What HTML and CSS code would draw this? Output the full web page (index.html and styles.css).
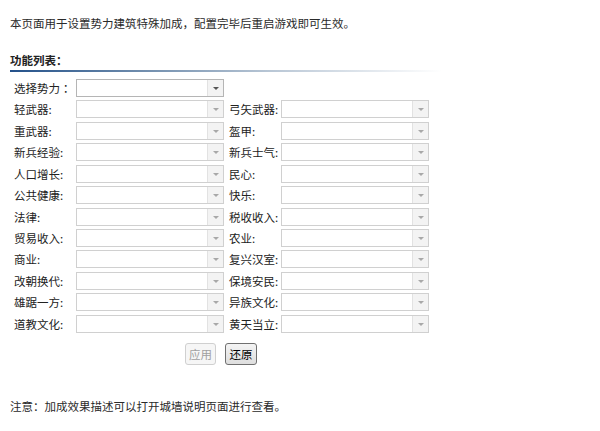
FILE: index.html
```html
<!DOCTYPE html>
<html lang="zh-CN">
<head>
<meta charset="utf-8">
<title>势力建筑特殊加成</title>
<link rel="stylesheet" href="styles.css">
</head>
<body>
<div class="page">
  <p class="intro">本页面用于设置势力建筑特殊加成<span class="pn">，</span>配置完毕后重启游戏即可生效。</p>
  <h2 class="title">功能列表<span class="pn">：</span></h2>
  <div class="rule"></div>
  <div class="form">
    <span class="lbl">选择势力<span class="pn">：</span></span><div class="sel active"><span class="arrow"></span></div><span class="empty"></span><span class="empty"></span>
    <span class="lbl">轻武器:</span><div class="sel"><span class="arrow"></span></div><span class="lbl r">弓矢武器:</span><div class="sel"><span class="arrow"></span></div>
    <span class="lbl">重武器:</span><div class="sel"><span class="arrow"></span></div><span class="lbl r">盔甲:</span><div class="sel"><span class="arrow"></span></div>
    <span class="lbl">新兵经验:</span><div class="sel"><span class="arrow"></span></div><span class="lbl r">新兵士气:</span><div class="sel"><span class="arrow"></span></div>
    <span class="lbl">人口增长:</span><div class="sel"><span class="arrow"></span></div><span class="lbl r">民心:</span><div class="sel"><span class="arrow"></span></div>
    <span class="lbl">公共健康:</span><div class="sel"><span class="arrow"></span></div><span class="lbl r">快乐:</span><div class="sel"><span class="arrow"></span></div>
    <span class="lbl">法律:</span><div class="sel"><span class="arrow"></span></div><span class="lbl r">税收收入:</span><div class="sel"><span class="arrow"></span></div>
    <span class="lbl">贸易收入:</span><div class="sel"><span class="arrow"></span></div><span class="lbl r">农业:</span><div class="sel"><span class="arrow"></span></div>
    <span class="lbl">商业:</span><div class="sel"><span class="arrow"></span></div><span class="lbl r">复兴汉室:</span><div class="sel"><span class="arrow"></span></div>
    <span class="lbl">改朝换代:</span><div class="sel"><span class="arrow"></span></div><span class="lbl r">保境安民:</span><div class="sel"><span class="arrow"></span></div>
    <span class="lbl">雄踞一方:</span><div class="sel"><span class="arrow"></span></div><span class="lbl r">异族文化:</span><div class="sel"><span class="arrow"></span></div>
    <span class="lbl">道教文化:</span><div class="sel"><span class="arrow"></span></div><span class="lbl r">黄天当立:</span><div class="sel"><span class="arrow"></span></div>
  </div>
  <div class="buttons">
    <button class="btn disabled" disabled>应用</button>
    <button class="btn">还原</button>
  </div>
  <p class="note">注意<span class="pn">：</span>加成效果描述可以打开城墙说明页面进行查看。</p>
</div>
</body>
</html>
```
FILE: styles.css
```css
html, body {
  margin: 0;
  padding: 0;
  background: #ffffff;
}
.page {
  font-family: "Noto Sans CJK SC", "Noto Sans", sans-serif;
  font-size: 11.5px;
  color: #222;
  padding-left: 10px;
}
.pn {
  font-family: "Noto Sans CJK TC", "Noto Sans CJK SC", sans-serif;
}
.intro {
  margin: 0;
  padding-top: 15px;
  line-height: 16px;
  color: #2a2a2a;
}
.title {
  margin: 21px 0 0 0;
  font-size: 11.5px;
  font-weight: bold;
  line-height: 16px;
  color: #222;
}
.rule {
  margin-top: 2px;
  width: 432px;
  height: 2px;
  background: linear-gradient(to right, #23518a 0%, #6f8cac 30%, #b8c6d5 60%, rgba(255,255,255,0) 100%);
}
.form {
  margin-top: 7px;
  padding-left: 4px;
  display: grid;
  grid-template-columns: 62px 148px 57px 148px;
  grid-auto-rows: 18px;
  row-gap: 3.43px;
}
.lbl {
  display: flex;
  align-items: center;
  line-height: 18px;
  white-space: nowrap;
}
.lbl.r {
  padding-left: 5px;
}
.sel {
  position: relative;
  box-sizing: border-box;
  height: 18px;
  border: 1px solid #d0d0d0;
  background: #fff;
}
.sel.active {
  border-color: #b5b5b5;
}
.arrow {
  position: absolute;
  right: 0;
  top: 0;
  bottom: 0;
  width: 15px;
  background: #f3f3f3;
  border-left: 1px solid #e2e2e2;
}
.arrow::after {
  content: "";
  position: absolute;
  left: 5px;
  top: 7px;
  border-left: 3px solid transparent;
  border-right: 3px solid transparent;
  border-top: 3px solid #a8a8a8;
}
.sel.active .arrow::after {
  border-top-color: #555;
}
.buttons {
  margin-top: 10px;
  display: flex;
  gap: 9px;
  padding-left: 175px;
}
.btn {
  box-sizing: border-box;
  height: 22px;
  width: 32px;
  padding: 0;
  font-family: "Noto Sans CJK SC", "Noto Sans", sans-serif;
  font-size: 11.5px;
  border-radius: 3px;
  border: 1px solid #707070;
  background: linear-gradient(#f4f4f4, #dedede);
  color: #000;
}
.btn.disabled {
  width: 31px;
  border-color: #d0d0d0;
  background: #f6f6f6;
  color: #a0a0a0;
}
.note {
  margin: 33px 0 0 0;
  line-height: 16px;
  color: #2a2a2a;
}
```
